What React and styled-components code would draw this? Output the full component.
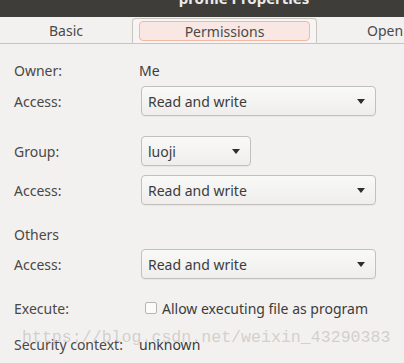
import React from 'react';
import styled, { createGlobalStyle } from 'styled-components';

const GlobalStyle = createGlobalStyle`
  html, body {
    margin: 0;
    padding: 0;
    background: #f2f1f0;
  }
  body {
    font-family: "Noto Sans", "DejaVu Sans", sans-serif;
    color: #3c3c3c;
  }
`;

const Window = styled.div`
  position: relative;
  width: 404px;
  height: 363px;
  overflow: hidden;
  background: #f2f1f0;
`;

const TitleBar = styled.div`
  height: 17px;
  background: #3e3d39;
  overflow: hidden;
  display: flex;
  justify-content: center;
  padding-left: 84px;
`;

const Title = styled.span`
  margin-top: -12px;
  font-size: 15px;
  font-weight: 700;
  color: #ecebe9;
  line-height: 20px;
  white-space: nowrap;
`;

const TabStrip = styled.div`
  height: 26px;
  display: flex;
  align-items: flex-end;
  border-bottom: 1px solid #c8c5c1;
  white-space: nowrap;
`;

const Tab = styled.div`
  box-sizing: border-box;
  width: ${(p) => p.width}px;
  flex-shrink: 0;
  height: 25px;
  display: flex;
  align-items: center;
  justify-content: ${(p) => (p.align === 'left' ? 'flex-start' : 'center')};
  padding-left: ${(p) => (p.align === 'left' ? '50px' : '0')};
  font-size: 14px;
  color: #4a4a48;
  ${(p) =>
    p.active &&
    `
    border: 1px solid #c8c5c1;
    border-bottom: none;
    border-radius: 4px 4px 0 0;
    background: #f6f5f4;
    padding: 2px 6px 2px 6px;
  `}
`;

const Pill = styled.div`
  box-sizing: border-box;
  width: 100%;
  height: 20px;
  display: flex;
  align-items: center;
  justify-content: center;
  border: 1px solid #f1b8a6;
  border-radius: 4px;
  background: #f8e7e2;
`;

const Body = styled.div`
  padding-left: 14px;
  display: flex;
  flex-direction: column;
`;

const Row = styled.div`
  display: flex;
  align-items: center;
  height: ${(p) => p.h || 22}px;
  margin-top: ${(p) => p.mt}px;
  font-size: 14px;
`;

const Label = styled.div`
  width: ${(p) => p.w || 125}px;
  flex-shrink: 0;
  color: #4a4846;
`;

const Value = styled.div`
  color: #3c3c3c;
`;

const Combo = styled.div`
  box-sizing: border-box;
  width: ${(p) => p.w}px;
  height: 30px;
  margin-left: 2px;
  display: flex;
  align-items: center;
  justify-content: space-between;
  padding: 0 10px 0 6px;
  border: 1px solid #c3bfba;
  border-radius: 4px;
  background: linear-gradient(#f9f9f8, #efeeec);
  box-shadow: 0 1px 0 rgba(0, 0, 0, 0.04);
  color: #3c3c3c;
`;

const Arrow = styled.span`
  width: 0;
  height: 0;
  border-left: 4px solid transparent;
  border-right: 4px solid transparent;
  border-top: 5px solid #2e2e2e;
  margin-top: 1px;
`;

const CheckWrap = styled.label`
  display: flex;
  align-items: center;
  gap: 5px;
  margin-left: 6px;
  color: #3c3c3c;
`;

const Check = styled.span`
  box-sizing: border-box;
  width: 12px;
  height: 12px;
  border: 1px solid #b7b3ae;
  border-radius: 2px;
  background: #fbfbfb;
`;

const Watermark = styled.div`
  position: absolute;
  left: 22px;
  top: 328px;
  font-family: "Liberation Mono", monospace;
  font-size: 16.6px;
  color: rgba(200, 196, 192, 0.75);
  white-space: nowrap;
  pointer-events: none;
`;

const AccessCombo = () => (
  <Combo w={235}>
    <span>Read and write</span>
    <Arrow />
  </Combo>
);

export default function App() {
  return (
    <Window>
      <GlobalStyle />
      <TitleBar>
        <Title>profile Properties</Title>
      </TitleBar>
      <TabStrip>
        <Tab width={132}>Basic</Tab>
        <Tab width={185} active>
          <Pill>Permissions</Pill>
        </Tab>
        <Tab width={100} align="left">Open With</Tab>
      </TabStrip>
      <Body>
        <Row mt={15}>
          <Label>Owner:</Label>
          <Value>Me</Value>
        </Row>
        <Row mt={5} h={30}>
          <Label>Access:</Label>
          <AccessCombo />
        </Row>
        <Row mt={20} h={30}>
          <Label>Group:</Label>
          <Combo w={110}>
            <span>luoji</span>
            <Arrow />
          </Combo>
        </Row>
        <Row mt={9} h={30}>
          <Label>Access:</Label>
          <AccessCombo />
        </Row>
        <Row mt={18}>
          <Label>Others</Label>
        </Row>
        <Row mt={4} h={30}>
          <Label>Access:</Label>
          <AccessCombo />
        </Row>
        <Row mt={18}>
          <Label>Execute:</Label>
          <CheckWrap>
            <Check />
            Allow executing file as program
          </CheckWrap>
        </Row>
        <Row mt={14}>
          <Label>Security context:</Label>
          <Value>unknown</Value>
        </Row>
      </Body>
      <Watermark>https://blog.csdn.net/weixin_43290383</Watermark>
    </Window>
  );
}
